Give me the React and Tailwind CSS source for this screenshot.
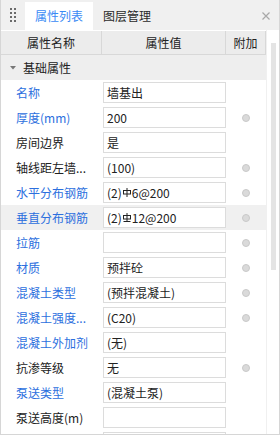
import React from "react";

const FONT = { fontFamily: '"Microsoft YaHei","Noto Sans CJK SC","Noto Sans",sans-serif' };

function Rebar({ grade }) {
  return (
    <svg width="8" height="10" viewBox="0 0 8 10" className="inline-block align-[3px] mx-[1px]">
      <rect x="0.5" y="2.5" width="7" height="3.5" fill="none" stroke="#222" strokeWidth="1" />
      <line x1="4" y1="0" x2="4" y2="9" stroke="#222" strokeWidth="1" />
      {grade === 400 && <line x1="0.5" y1="8.5" x2="7.5" y2="8.5" stroke="#222" strokeWidth="1" />}
    </svg>
  );
}

const rows = [
  { label: "名称", blue: true, value: "墙基出", dot: false },
  { label: "厚度(mm)", blue: true, value: "200", dot: true },
  { label: "房间边界", blue: false, value: "是", dot: false },
  { label: "轴线距左墙...", blue: false, value: "(100)", dot: true },
  { label: "水平分布钢筋", blue: true, value: <>(2)<Rebar grade={300} />6@200</>, dot: true },
  { label: "垂直分布钢筋", blue: true, value: <>(2)<Rebar grade={400} />12@200</>, dot: true, hl: true },
  { label: "拉筋", blue: true, value: "", dot: true },
  { label: "材质", blue: true, value: "预拌砼", dot: true },
  { label: "混凝土类型", blue: true, value: "(预拌混凝土)", dot: true },
  { label: "混凝土强度...", blue: true, value: "(C20)", dot: true },
  { label: "混凝土外加剂", blue: true, value: "(无)", dot: false },
  { label: "抗渗等级", blue: false, value: "无", dot: true },
  { label: "泵送类型", blue: true, value: "(混凝土泵)", dot: false },
  { label: "泵送高度(m)", blue: false, value: "", dot: false },
  { label: "", blue: false, value: "", dot: false },
];

export default function App() {
  return (
    <div style={FONT} className="w-[280px] h-[436px] bg-white text-[12px] leading-[16px] text-[#222] overflow-hidden">
      <div className="w-[280px] h-[435px] border border-[#d6d6d6] border-t-0 flex flex-col overflow-hidden">
        {/* Tab bar */}
        <div className="h-[30px] bg-[#f0f0f0] flex items-stretch shrink-0">
          <div className="w-[24px] flex items-center justify-center">
            <div className="grid grid-cols-2 gap-x-[2px] gap-y-[2px]">
              {Array.from({ length: 8 }).map((_, i) => (
                <div key={i} className="w-[2px] h-[2px] bg-[#6b6b6b]" />
              ))}
            </div>
          </div>
          <div className="mt-[2px] w-[68px] bg-white flex items-center justify-center text-[#3a8af5]">属性列表</div>
          <div className="ml-[10px] flex items-center text-[#2a2a2a] pt-[2px]">图层管理</div>
          <div className="flex-1" />
          <div className="w-[22px] flex items-center justify-center pr-[4px] pt-[1px]">
            <svg width="8" height="8" viewBox="0 0 8 8">
              <path d="M0.5 0.5 L7.5 7.5 M7.5 0.5 L0.5 7.5" stroke="#a8a8a8" strokeWidth="1.2" />
            </svg>
          </div>
        </div>
        {/* Body */}
        <div className="flex flex-1 min-h-0">
          <div className="w-[265px] flex flex-col shrink-0">
            <div className="h-[25px] border-t border-white border-b border-b-[#d8d8d8] bg-[#ececec] flex shrink-0">
              <div className="w-[101px] border-r border-[#d8d8d8] flex items-center justify-center">属性名称</div>
              <div className="w-[124px] border-r border-[#d8d8d8] flex items-center justify-center">属性值</div>
              <div className="flex-1 border-r border-[#d8d8d8] flex items-center justify-center">附加</div>
            </div>
            <div className="h-[25px] bg-[#eeeeee] flex items-center shrink-0">
              <svg width="6" height="4" viewBox="0 0 6 4" className="ml-[9px] mr-[7px]">
                <path d="M0 0 L6 0 L3 3.5 Z" fill="#777" />
              </svg>
              <span>基础属性</span>
            </div>
            {rows.map((r, i) => (
              <div key={i} className={`h-[25px] flex items-center shrink-0 ${r.hl ? "bg-[#f0f0f0]" : "bg-white"}`}>
                <div className={`w-[101px] pl-[15px] whitespace-nowrap ${r.blue ? "text-[#2c6fde]" : "text-[#222]"}`}>
                  {r.label}
                </div>
                <div className="w-[123px] h-[21px] ml-px border border-[#dcdcdc] bg-white flex items-center pl-[3px] whitespace-nowrap">
                  {r.value}
                </div>
                <div className="flex-1 flex items-center justify-center">
                  {r.dot && <div className="w-[8px] h-[8px] rounded-full bg-[#dadada] border border-[#c9c9c9]" />}
                </div>
              </div>
            ))}
          </div>
          <div className="flex-1 bg-white border-l border-[#f0f0f0]">
            <div className="mt-[13px] ml-[4px] w-[5px] h-[227px] bg-[#e4e4e4]" />
          </div>
        </div>
      </div>
    </div>
  );
}
